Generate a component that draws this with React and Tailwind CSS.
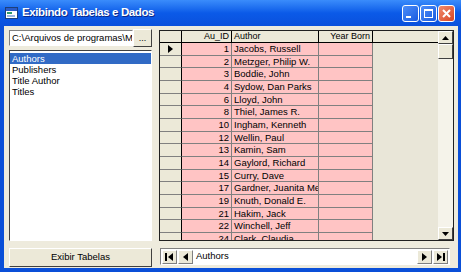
const rows = [
  [1, 'Jacobs, Russell'],
  [2, 'Metzger, Philip W.'],
  [3, 'Boddie, John'],
  [4, 'Sydow, Dan Parks'],
  [6, 'Lloyd, John'],
  [8, 'Thiel, James R.'],
  [10, 'Ingham, Kenneth'],
  [12, 'Wellin, Paul'],
  [13, 'Kamin, Sam'],
  [14, 'Gaylord, Richard'],
  [15, 'Curry, Dave'],
  [17, 'Gardner, Juanita Mei'],
  [19, 'Knuth, Donald E.'],
  [21, 'Hakim, Jack'],
  [22, 'Winchell, Jeff'],
  [24, 'Clark, Claudia'],
];

const tables = ['Authors', 'Publishers', 'Title Author', 'Titles'];

function TitleButton({ children, red = false }) {
  return (
    <div
      className={`flex h-[17px] w-[17px] items-center justify-center rounded-[3px] border border-white ${
        red ? 'bg-gradient-to-br from-[#f08a6c] to-[#d8431e]' : 'bg-gradient-to-br from-[#4c8df8] to-[#1a5ae0]'
      }`}
    >
      {children}
    </div>
  );
}

function NavButton({ children }) {
  return (
    <div className="flex h-[14px] w-[15px] items-center justify-center border-t border-l border-t-white border-l-white border-r border-b border-r-[#808080] border-b-[#808080] bg-[#ece9d8]">
      {children}
    </div>
  );
}

export default function App() {
  return (
    <div className="flex h-[272px] w-[461px] flex-col overflow-hidden bg-[#0a4fd8] font-['Liberation_Sans',Arial,sans-serif] text-[9px] text-black">
      {/* title bar */}
      <div className="flex h-[26px] items-center bg-gradient-to-b from-[#3a8cfb] via-[#0b5ae8] to-[#0a50dc] pl-[5px] pr-[6px]">
        <svg width="13" height="12" viewBox="0 0 13 12">
          <rect x="0.5" y="0.5" width="12" height="11" fill="#fff" stroke="#1d3f7a" />
          <rect x="1" y="1" width="11" height="3" fill="#2a5bc8" />
          <rect x="2" y="5" width="5" height="2" fill="#2e9a6a" />
          <rect x="2" y="8" width="8" height="2" fill="#9bb6e0" />
        </svg>
        <span className="ml-[4px] text-[11.5px] font-bold tracking-[-0.4px] text-white [text-shadow:1px_1px_0_#0a2a8a]">
          Exibindo Tabelas e Dados
        </span>
        <div className="ml-auto flex gap-[1px]">
          <TitleButton>
            <div className="mt-[7px] mr-[5px] h-[2px] w-[5px] bg-white" />
          </TitleButton>
          <TitleButton>
            <div className="h-[9px] w-[9px] border border-t-[2px] border-white" />
          </TitleButton>
          <TitleButton red>
            <svg width="9" height="9" viewBox="0 0 9 9">
              <path d="M1 1L8 8M8 1L1 8" stroke="#fff" strokeWidth="2" />
            </svg>
          </TitleButton>
        </div>
      </div>

      {/* client area */}
      <div className="mb-[4px] ml-[4px] mr-[3px] flex flex-1 bg-[#eeebdd] pl-[5px] pt-[3px]">
        {/* left column */}
        <div className="flex w-[143px] flex-col">
          <div className="flex h-[18px] items-center">
            <div className="h-[16px] w-[124px] overflow-hidden border-t border-l border-t-[#808080] border-l-[#808080] border-b border-r border-b-white border-r-white bg-white">
              <div className="whitespace-nowrap pl-[2px] text-[9.5px] leading-[14px]">C:\Arquivos de programas\Mi</div>
            </div>
            <div className="flex h-[18px] w-[19px] items-end justify-center border-t border-l border-t-white border-l-white border-r border-b border-r-[#404040] border-b-[#404040] bg-[#ece9d8] pb-[3px] text-[9px] leading-none">
              ...
            </div>
          </div>
          <div className="mt-[3px] h-[191px] border-t border-l border-t-[#404040] border-l-[#404040] border-b border-r border-b-white border-r-white bg-white pt-[2px]">
            {tables.map((t, i) => (
              <div
                key={t}
                className={`flex h-[11.3px] items-center pl-[2px] text-[9.5px] ${i === 0 ? 'bg-[#316ac5] text-white' : ''}`}
              >
                {t}
              </div>
            ))}
          </div>
          <div className="mt-[7px] flex h-[19px] items-center justify-center border-t border-l border-t-white border-l-white border-r border-b border-r-[#404040] border-b-[#404040] bg-[#ece9d8] text-[9.5px]">
            Exibir Tabelas
          </div>
        </div>

        {/* right column */}
        <div className="ml-[7px] flex w-[295px] flex-col pt-[1px]">
          <div className="flex h-[211px] overflow-hidden border border-[#202020] bg-[#e9e6d8]">
            <div className="flex flex-1 flex-col">
              {/* header */}
              <div className="flex h-[12px] shrink-0 border-b border-black bg-[#ece9d8] text-[9px]">
                <div className="w-[22px] border-r border-black" />
                <div className="w-[50px] border-r border-black pr-[2px] text-right leading-[11px]">Au_ID</div>
                <div className="w-[87px] border-r border-black pl-[2px] leading-[11px]">Author</div>
                <div className="w-[54px] whitespace-nowrap border-r border-black pr-[2px] text-right leading-[11px]">
                  Year Born
                </div>
              </div>
              {rows.map(([id, name], i) => (
                <div key={id} className="flex h-[12.67px] shrink-0">
                  <div className="flex w-[22px] items-center justify-center border-r border-b border-r-black border-b-[#808080] bg-[#ece9d8]">
                    {i === 0 && (
                      <svg width="5" height="8" viewBox="0 0 5 8">
                        <path d="M0 0L5 4L0 8Z" fill="#000" />
                      </svg>
                    )}
                  </div>
                  <div className="w-[50px] border-r border-b border-[#808080] bg-[#ffc4c4] pr-[2px] text-right text-[9.5px] leading-[11.5px]">
                    {id}
                  </div>
                  <div className="w-[87px] overflow-hidden whitespace-nowrap border-r border-b border-[#808080] bg-[#ffc4c4] pl-[2px] text-[9.5px] leading-[11.5px]">
                    {name}
                  </div>
                  <div className="w-[54px] border-r border-b border-[#808080] bg-[#ffc4c4]" />
                </div>
              ))}
            </div>
            {/* scrollbar */}
            <div className="flex w-[15px] flex-col bg-[#f5f3ea]">
              <div className="flex h-[13px] items-center justify-center border-t border-l border-t-white border-l-white border-r border-b border-r-[#404040] border-b-[#404040] bg-[#ece9d8]">
                <svg width="7" height="4" viewBox="0 0 7 4">
                  <path d="M3.5 0L7 4H0Z" fill="#000" />
                </svg>
              </div>
              <div className="h-[15px] border-t border-l border-t-white border-l-white border-r border-b border-r-[#404040] border-b-[#404040] bg-[#ece9d8]" />
              <div className="flex-1" />
              <div className="flex h-[13px] items-center justify-center border-t border-l border-t-white border-l-white border-r border-b border-r-[#404040] border-b-[#404040] bg-[#ece9d8]">
                <svg width="7" height="4" viewBox="0 0 7 4">
                  <path d="M0 0H7L3.5 4Z" fill="#000" />
                </svg>
              </div>
            </div>
          </div>

          {/* data control */}
          <div className="ml-[1px] mt-[7px] flex h-[17px] w-[290px] items-center border-t border-l border-t-[#808080] border-l-[#808080] border-b border-r border-b-white border-r-white bg-white px-[1px]">
            <NavButton>
              <svg width="9" height="8" viewBox="0 0 9 8">
                <rect x="0" y="0" width="2" height="8" fill="#000" />
                <path d="M8 0L3 4L8 8Z" fill="#000" />
              </svg>
            </NavButton>
            <div className="ml-[1px]">
              <NavButton>
                <svg width="5" height="8" viewBox="0 0 5 8">
                  <path d="M5 0L0 4L5 8Z" fill="#000" />
                </svg>
              </NavButton>
            </div>
            <span className="ml-[3px] text-[9.5px]">Authors</span>
            <div className="ml-auto flex gap-[1px]">
              <NavButton>
                <svg width="5" height="8" viewBox="0 0 5 8">
                  <path d="M0 0L5 4L0 8Z" fill="#000" />
                </svg>
              </NavButton>
              <NavButton>
                <svg width="9" height="8" viewBox="0 0 9 8">
                  <path d="M1 0L6 4L1 8Z" fill="#000" />
                  <rect x="7" y="0" width="2" height="8" fill="#000" />
                </svg>
              </NavButton>
            </div>
          </div>
        </div>
      </div>
    </div>
  );
}
